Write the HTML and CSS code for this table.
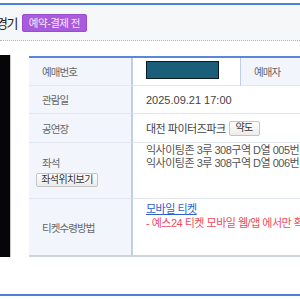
FILE: index.html
```
<!DOCTYPE html>
<html lang="ko">
<head>
<meta charset="utf-8">
<title>예매 상세</title>
<link rel="stylesheet" href="styles.css">
</head>
<body>
<div class="page">
  <header class="head">
    <h2 class="title">경기</h2>
    <span class="badge">예약-결제 전</span>
  </header>
  <div class="detail">
    <div class="poster"></div>
    <div class="info">
      <div class="lab">예매번호</div>
      <div class="val"><span class="mask"></span></div>
      <div class="lab lab-side">예매자</div>
      <div class="val"></div>

      <div class="lab">관람일</div>
      <div class="val wide date">2025.09.21 17:00</div>

      <div class="lab">공연장</div>
      <div class="val wide ko">대전 파이터즈파크 <button class="btn btn-map" type="button">약도</button></div>

      <div class="lab lab-stack">
        <span>좌석</span>
        <button class="btn btn-seat" type="button">좌석위치보기</button>
      </div>
      <div class="val wide ko seats">
        <span class="line">익사이팅존 3루 308구역 D열 005번</span>
        <span class="line">익사이팅존 3루 308구역 D열 006번</span>
      </div>

      <div class="lab last">티켓수령방법</div>
      <div class="val wide ko recv last">
        <a class="link" href="#">모바일 티켓</a>
        <span class="note">- 예스24 티켓 모바일 웹/앱 에서만 확인</span>
      </div>
    </div>
  </div>
  <div class="next"></div>
</div>
</body>
</html>
```
FILE: styles.css
```
* { box-sizing: border-box; }
html, body { margin: 0; padding: 0; background: #fff; }
body {
  font-family: "Liberation Sans", "Noto Sans CJK KR", sans-serif;
  font-size: 11px;
  color: #444;
}
.page {
  width: 300px;
  height: 300px;
  overflow: hidden;
  padding-top: 3px;
}
.head {
  display: flex;
  align-items: center;
  gap: 5px;
  height: 38px;
  border-top: 2px solid #4f7fd6;
  border-bottom: 1px dotted #b5b5b5;
  background: #f6f7f9;
  white-space: nowrap;
}
.title {
  margin: 0 0 0 -4px;
  font-size: 13px;
  font-weight: normal;
  letter-spacing: -1.5px;
  color: #222;
}
.badge {
  display: inline-flex;
  align-items: center;
  justify-content: center;
  width: 65px;
  height: 18px;
  background: #a85bdb;
  border: 1px solid #9a4bcf;
  border-radius: 2px;
  color: #f4e8ff;
  font-size: 10.5px;
  letter-spacing: -0.5px;
}
.detail {
  display: flex;
  align-items: flex-start;
  gap: 18px;
  margin-top: 14px;
}
.poster {
  flex: 0 0 11px;
  height: 202px;
  background: #060608;
  border-right: 1px solid #c9c9c9;
}
.info {
  flex: 0 0 400px;
  margin-top: 1px;
  display: grid;
  grid-template-columns: 104px 107px 90px 99px;
  grid-template-rows: 28px 28px 29px 56px 58px;
  border-top: 2px solid #5b87d8;
}
.lab {
  display: flex;
  align-items: center;
  padding-left: 13px;
  background: #f2f6fc;
  border-right: 2px solid #c2cee6;
  border-bottom: 1px solid #e2e6ee;
  color: #666;
  font-size: 10.5px;
  letter-spacing: -0.9px;
  white-space: nowrap;
}
.lab-side {
  border-left: 1px solid #c2cee6;
  border-right: none;
}
.lab-stack {
  flex-direction: column;
  align-items: flex-start;
  justify-content: center;
  gap: 3px;
  padding-top: 1px;
}
.val {
  display: flex;
  align-items: center;
  padding-left: 13px;
  border-bottom: 1px solid #e2e6ee;
  white-space: nowrap;
  color: #444;
}
.wide { grid-column: 2 / 5; }
.date { font-size: 11px; color: #444; }
.ko { font-size: 11px; letter-spacing: -0.5px; }
.mask {
  width: 73px;
  height: 18px;
  margin-top: -3px;
  background: #1b5e7a;
  border: 1px solid #0b1b22;
}
.btn {
  font-family: "Liberation Sans", "Noto Sans CJK KR", sans-serif;
  font-size: 10px;
  letter-spacing: -0.6px;
  color: #333;
  background: linear-gradient(#ffffff, #ebebeb);
  border: 1px solid #c4c4c4;
  border-radius: 2px;
  padding: 0;
  line-height: 12px;
}
.btn-map {
  width: 31px;
  height: 15px;
  margin-left: 3px;
}
.btn-seat {
  width: 62px;
  height: 14px;
  margin-left: -6px;
}
.seats {
  flex-direction: column;
  align-items: flex-start;
  justify-content: flex-start;
  padding-top: 1px;
  line-height: 13px;
  color: #555;
}
.recv {
  flex-direction: column;
  align-items: flex-start;
  justify-content: flex-start;
  padding-top: 3px;
  line-height: 14px;
}
.last { border-bottom: 2px solid #d0d4db; }
.link {
  color: #2f5fd0;
  text-decoration: underline;
}
.note { color: #ec4a5e; }
.next {
  margin-top: 37px;
  height: 10px;
  border-top: 2px solid #4f7fd6;
}
```
